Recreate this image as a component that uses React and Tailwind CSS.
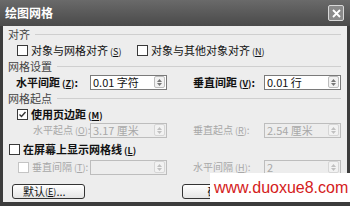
import React from 'react';

const FONT = { fontFamily: '"SimSun", "Noto Sans CJK SC", sans-serif' };

function Casilla({ marcada = false, deshabilitada = false }) {
  return (
    <span
      className={`flex h-[11px] w-[11px] shrink-0 items-center justify-center border bg-white ${
        deshabilitada ? 'border-[#c4c4c4]' : 'border-[#3a3a3a]'
      }`}
    >
      {marcada && (
        <svg width="9" height="9" viewBox="0 0 9 9">
          <path d="M1.5 4.5 L3.5 6.5 L7.5 2" fill="none" stroke="#333" strokeWidth="1.4" />
        </svg>
      )}
    </span>
  );
}

function Atajo({ letra }) {
  return (
    <span className="text-[9px]">
      {' ('}
      <span className="underline">{letra}</span>
      {')'}
    </span>
  );
}

function Grupo({ titulo }) {
  return (
    <div className="flex h-[16px] items-center gap-[5px] pl-[5px] pr-[6px] text-[#444]">
      <span className="whitespace-nowrap">{titulo}</span>
      <span className="h-px flex-1 bg-[#cfcfcf]" />
    </div>
  );
}

function Spinner({ deshabilitada }) {
  const color = deshabilitada ? '#c0c0c0' : '#777';
  return (
    <span
      className={`flex h-[12px] w-[11px] shrink-0 flex-col items-center justify-center gap-[1px] rounded-[2px] border ${
        deshabilitada ? 'border-[#d6d6d6]' : 'border-[#bdbdbd]'
      } bg-[#f2f2f2]`}
    >
      <svg width="5" height="3" viewBox="0 0 5 3">
        <path d="M0 3 L2.5 0 L5 3 Z" fill={color} />
      </svg>
      <svg width="5" height="3" viewBox="0 0 5 3">
        <path d="M0 0 L2.5 3 L5 0 Z" fill={color} />
      </svg>
    </span>
  );
}

function Campo({ valor, deshabilitada = false }) {
  return (
    <div
      className={`flex h-[15px] w-[77px] shrink-0 items-center justify-between border pl-[2px] pr-[1px] text-[11px] ${
        deshabilitada
          ? 'border-[#bdbdbd] bg-[#ededed] text-[#a8a8a8]'
          : 'border-[#7a7a7a] bg-white text-[#111]'
      }`}
    >
      <span className="whitespace-pre leading-none">{valor}</span>
      <Spinner deshabilitada={deshabilitada} />
    </div>
  );
}

export default function App() {
  return (
    <div
      className="relative flex h-[206px] w-[350px] flex-col overflow-hidden bg-[#3c3c3c] text-[11px] text-[#111]"
      style={FONT}
    >
      <div className="flex h-[26px] shrink-0 items-center justify-between bg-gradient-to-b from-[#6a6a6a] to-[#4a4a4a] pl-[5px] pr-[6px]">
        <span className="text-[12px] font-bold text-white">绘图网格</span>
        <span className="flex h-[16px] w-[16px] items-center justify-center rounded-[2px] border border-[#d8d8d8] bg-[#8a8a8a]">
          <svg width="9" height="9" viewBox="0 0 9 9">
            <path d="M1 1 L8 8 M8 1 L1 8" stroke="#fff" strokeWidth="1.8" />
          </svg>
        </span>
      </div>

      <div className="mx-[3px] mb-[4px] flex flex-1 flex-col whitespace-nowrap bg-[#ededed]">
        <Grupo titulo="对齐" />

        <div className="flex h-[16px] items-center">
          <div className="flex w-[134px] shrink-0 items-center gap-[3px] pl-[14px]">
            <Casilla />
            <span>
              对象与网格对齐
              <Atajo letra="S" />
            </span>
          </div>
          <div className="flex items-center gap-[3px]">
            <Casilla />
            <span>
              对象与其他对象对齐
              <Atajo letra="N" />
            </span>
          </div>
        </div>

        <Grupo titulo="网格设置" />

        <div className="flex h-[16px] items-center">
          <div className="flex w-[190px] shrink-0 items-center">
            <span className="w-[87px] shrink-0 pl-[13px] font-semibold">
              水平间距<Atajo letra="Z" />:
            </span>
            <Campo valor="0.01 字符" />
          </div>
          <span className="w-[71px] shrink-0 font-semibold">
            垂直间距<Atajo letra="V" />:
          </span>
          <Campo valor="0.01 行" />
        </div>

        <Grupo titulo="网格起点" />

        <div className="flex h-[17px] items-center gap-[3px] pl-[14px]">
          <Casilla marcada />
          <span className="font-semibold">
            使用页边距<Atajo letra="M" />
          </span>
        </div>

        <div className="flex h-[14px] items-center text-[10px] text-[#a8a8a8]">
          <div className="flex w-[190px] shrink-0 items-center">
            <span className="w-[87px] shrink-0 pl-[30px]">
              水平起点<Atajo letra="O" />:
            </span>
            <Campo valor="3.17 厘米" deshabilitada />
          </div>
          <span className="w-[71px] shrink-0">
            垂直起点<Atajo letra="R" />:
          </span>
          <Campo valor="2.54 厘米" deshabilitada />
        </div>

        <div className="mt-[4px] flex h-[16px] items-center gap-[3px] pl-[6px]">
          <Casilla />
          <span className="font-semibold">
            在屏幕上显示网格线<Atajo letra="L" />
          </span>
        </div>

        <div className="mt-[2px] flex h-[16px] items-center text-[10px] text-[#a8a8a8]">
          <div className="flex w-[190px] shrink-0 items-center">
            <div className="flex w-[87px] shrink-0 items-center gap-[3px] pl-[15px]">
              <Casilla deshabilitada />
              <span>
                垂直间隔<Atajo letra="T" />:
              </span>
            </div>
            <Campo valor="" deshabilitada />
          </div>
          <span className="w-[71px] shrink-0">
            水平间隔<Atajo letra="H" />:
          </span>
          <Campo valor="2" deshabilitada />
        </div>

        <div className="mt-[9px] flex items-center">
          <button className="ml-[9px] flex h-[15px] w-[73px] items-center rounded-[3px] border border-[#333] bg-gradient-to-b from-white to-[#e4e4e4] pl-[10px] text-[11px] text-[#111]">
            默认<Atajo letra="E" />...
          </button>
          <button className="ml-[97px] flex h-[15px] w-[73px] items-center justify-center rounded-[3px] border border-[#333] bg-gradient-to-b from-white to-[#e4e4e4] text-[11px] text-[#111]">
            确定
          </button>
        </div>
      </div>

      <div
        className="absolute left-[210px] top-[173px] flex h-[29px] w-[140px] items-center bg-white pl-[4px] text-[16px] text-[#d42020]"
        style={{ fontFamily: '"Liberation Sans", Arial, sans-serif' }}
      >
        www.duoxue8.com
      </div>
    </div>
  );
}
